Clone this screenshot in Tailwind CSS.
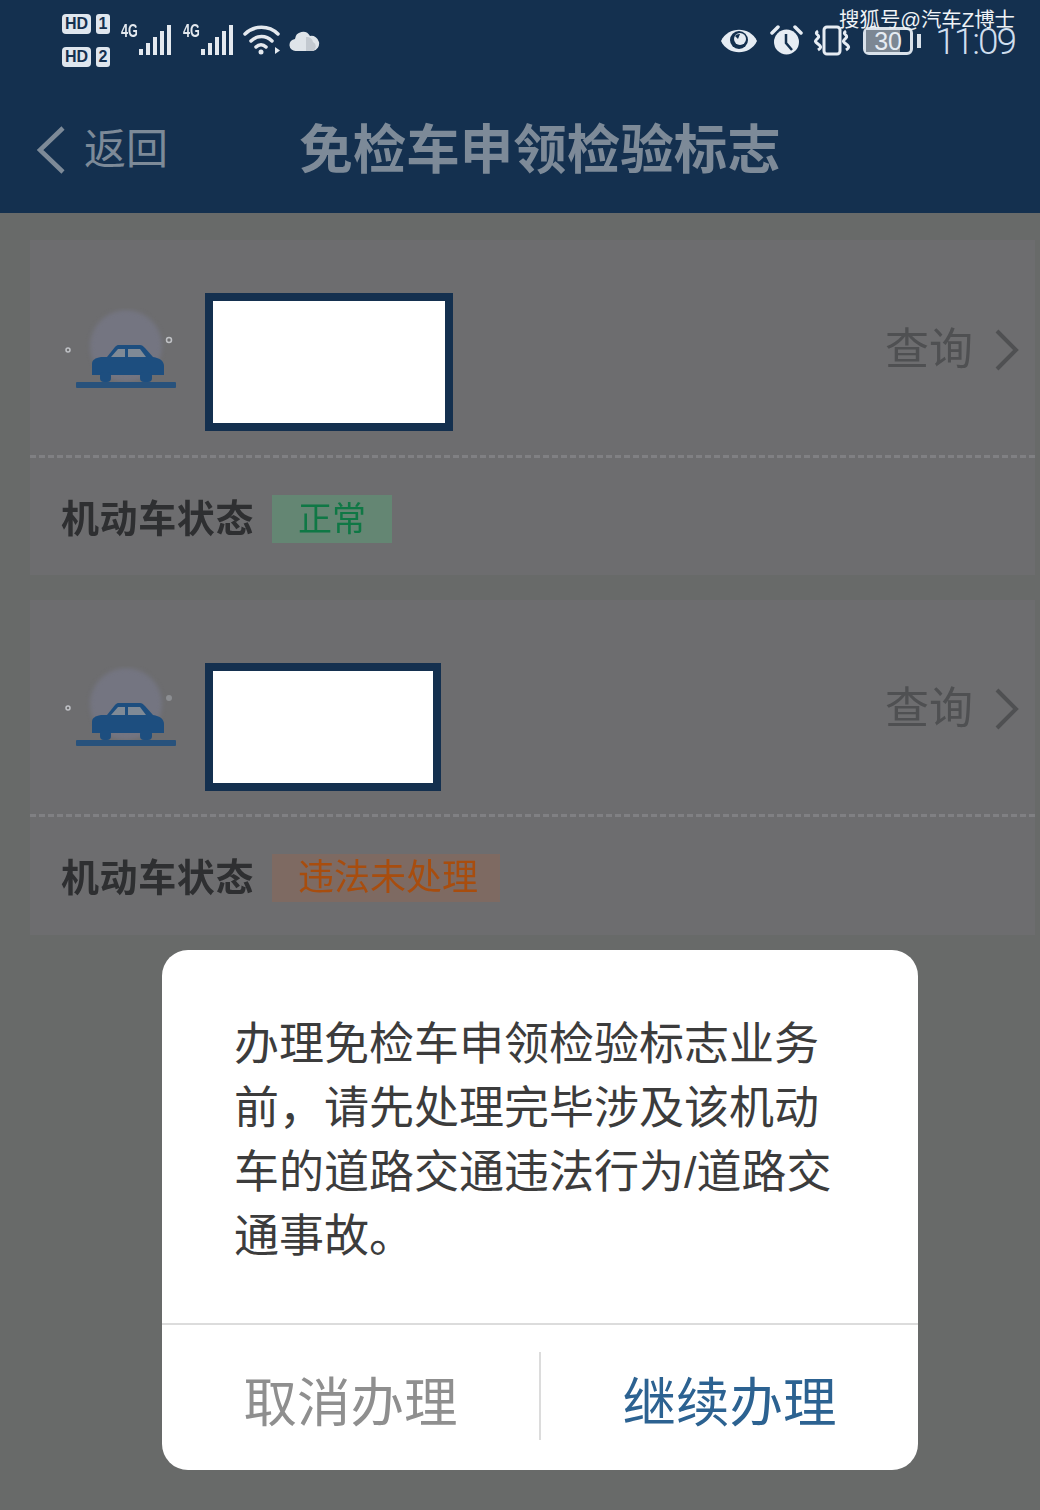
<!DOCTYPE html>
<html>
<head>
<meta charset="UTF-8"/>
<title>免检车申领检验标志</title>
<script src="https://cdn.jsdelivr.net/npm/@tailwindcss/browser@4"></script>
</head>
<body class="bg-[#686a69]">
<div class="relative w-[1040px] h-[1510px] overflow-hidden font-['Liberation_Sans','Noto_Sans_CJK_SC',sans-serif]">

    <!-- top bar -->
    <header class="h-[213px] bg-[#14304f] relative">
        <div class="flex h-[92px] items-start">
            <div class="ml-[62px] mt-[14px] flex flex-col gap-[13px] w-[50px]">
                <div class="flex gap-[5px]">
                    <span class="w-[29px] h-[20px] rounded-[4px] bg-[#dfe6ee] text-[#14304f] text-[16px] leading-[20px] font-bold text-center">HD</span>
                    <span class="w-[14px] h-[20px] rounded-[3px] bg-[#dfe6ee] text-[#14304f] text-[16px] leading-[20px] font-bold text-center">1</span>
                </div>
                <div class="flex gap-[5px]">
                    <span class="w-[29px] h-[20px] rounded-[4px] bg-[#dfe6ee] text-[#14304f] text-[16px] leading-[20px] font-bold text-center">HD</span>
                    <span class="w-[14px] h-[20px] rounded-[3px] bg-[#dfe6ee] text-[#14304f] text-[16px] leading-[20px] font-bold text-center">2</span>
                </div>
            </div>
            <div class="ml-[9px] mt-[21px] flex items-end h-[34px]">
                <span class="self-start text-[18px] leading-[20px] font-bold text-[#e4e9ef] w-[18px] scale-x-70 origin-left">4G</span>
                <svg width="33" height="31" viewBox="0 0 33 31" fill="#e4e9ef"><rect x="0" y="25" width="4" height="6"/><rect x="7" y="19" width="4" height="12"/><rect x="14" y="13" width="4" height="18"/><rect x="21" y="7" width="4" height="24"/><rect x="28" y="1" width="4" height="30"/></svg>
            </div>
            <div class="ml-[11px] mt-[21px] flex items-end h-[34px]">
                <span class="self-start text-[18px] leading-[20px] font-bold text-[#e4e9ef] w-[18px] scale-x-70 origin-left">4G</span>
                <svg width="33" height="31" viewBox="0 0 33 31" fill="#e4e9ef"><rect x="0" y="25" width="4" height="6"/><rect x="7" y="19" width="4" height="12"/><rect x="14" y="13" width="4" height="18"/><rect x="21" y="7" width="4" height="24"/><rect x="28" y="1" width="4" height="30"/></svg>
            </div>
            <svg class="ml-[9px] mt-[24px]" width="38" height="32" viewBox="0 0 38 32" fill="none" stroke="#e4e9ef" stroke-width="3.5" stroke-linecap="round"><path d="M2 10C11 1 26 1 35 10"/><path d="M8 17C14 11 23 11 29 17"/><path d="M13 23C16 20 20 20 23 23"/><circle cx="18" cy="28" r="2.5" fill="#e4e9ef" stroke="none"/><path d="M32 23v7l5-3.500z" fill="#e4e9ef" stroke="none"/></svg>
            <svg class="ml-[7px] mt-[29px]" width="32" height="24" viewBox="0 0 32 24"><path d="M8 22a6 6 0 0 1-1-12 8 8 0 0 1 15-3 7 7 0 0 1 3 15z" fill="#dfe4e9"/><path d="M18 22V8a6 6 0 0 1 7 5 5 5 0 0 1 0 9z" fill="#c3c9d0"/></svg>

            <div class="ml-auto mr-[25px] mt-[6px] flex flex-col items-end">
                <span class="text-[20.400px] leading-[28px] text-[#f0f3f6] z-10">搜狐号@汽车Z博士</span>
                <div class="flex items-center -mt-[11px] h-[36px]">
                    <svg width="38" height="28" viewBox="0 0 38 28"><path d="M1 14C8 -1 30 -1 37 14C30 29 8 29 1 14Z" fill="#e6ecf3"/><circle cx="19" cy="13" r="9" fill="#14304f"/><circle cx="20" cy="12" r="6" fill="#e6ecf3"/><path d="M15 9a6 6 0 0 1 5-2l-2 5z" fill="#14304f"/></svg>
                    <svg class="ml-[12px]" width="33" height="32" viewBox="0 0 33 32"><circle cx="16.500" cy="17" r="12.500" fill="#e6ecf3"/><path d="M16 9v9l6 7" fill="none" stroke="#14304f" stroke-width="2.500"/><path d="M2 8l6-6M31 8l-6-6" stroke="#e6ecf3" stroke-width="3.500" stroke-linecap="round"/></svg>
                    <svg class="ml-[10px]" width="38" height="32" viewBox="0 0 38 32" fill="none" stroke="#e6ecf3"><rect x="11" y="2" width="16" height="27" rx="3" stroke-width="3"/><path d="M5 6c-5 3 3 4 0 7s-4 3 0 6 3 4 0 6" stroke-width="3"/><path d="M33 6c-5 3 3 4 0 7s-4 3 0 6 3 4 0 6" stroke-width="3"/></svg>
                    <div class="ml-[12px] w-[50px] h-[28px] rounded-[6px] border-[3px] border-[#d9e1ea] relative flex items-center justify-center">
                        <div class="absolute left-0 top-0 bottom-0 w-[34px] bg-[#7c8793]"></div>
                        <span class="relative text-[25px] leading-none text-[#e6ecf3]">30</span>
                    </div>
                    <div class="ml-[4px] w-[4px] h-[14px] bg-[#d9e1ea]"></div>
                    <span class="ml-[14px] font-['Roboto'] font-light text-[37px] leading-none text-[#cfdeee] tracking-[-2px]">11:09</span>
                </div>
            </div>
        </div>
        <div class="relative h-[121px]">
            <div class="absolute left-[36px] top-[33px] flex items-center">
                <svg width="30" height="50" viewBox="0 0 30 50" fill="none" stroke="#7d8a98" stroke-width="4.500"><path d="M27 3L4 25L27 47"/></svg>
                <span class="ml-[18px] text-[42px] leading-[50px] text-[#7d8a98]">返回</span>
            </div>
            <h1 class="text-center pl-[40px] pt-[25px] text-[53.500px] leading-[68px] font-bold text-[#7d8a98]">免检车申领检验标志</h1>
        </div>
    </header>

    <!-- vehicle list -->
    <main class="pt-[27px] flex flex-col gap-[25px]">
        <section class="ml-[30px] mr-[5px] h-[335px] bg-[#6d6d6f]">
            <div class="h-[215px] flex items-start">
                <svg class="ml-[34px] mt-[68px]" width="114" height="82" viewBox="0 0 114 82" fill="none">
                    <circle class="blur-[2px]" cx="62" cy="38" r="36" fill="#747581"/>
                    <circle cx="4" cy="42" r="2" stroke="#bfc1c5" stroke-width="1.500"/>
                    <circle cx="105" cy="32" r="2.500" stroke="#bfc1c5" stroke-width="1.500"/>
                    <path d="M28 56c0-4 3-6 9-7h6l8-10c1-1 2-2 3-2h22c2 0 3 1 5 3l8 9c7 1 11 4 11 9v9H28z" fill="#1d4e7f"/>
                    <path d="M47 49l7-8h7v8zM64 41h12l6 8H64z" fill="#7f8a96"/>
                    <rect x="36" y="64" width="11" height="10" rx="4" fill="#1d4e7f"/><rect x="76" y="64" width="12" height="10" rx="4" fill="#1d4e7f"/>
                    <rect x="12" y="74" width="100" height="6" rx="1" fill="#28527c"/>
                </svg>
                <div class="ml-[27px] mt-[53px] w-[248px] h-[138px] bg-white border-[8px] border-[#14304f]"></div>
                <div class="ml-auto mt-[82px] mr-[15px] flex items-center">
                    <span class="text-[44px] leading-[56px] text-[#4f5052] blur-[0.5px]">查询</span>
                    <svg class="ml-[21px]" width="26" height="42" viewBox="0 0 26 42" fill="none" stroke="#4f5052" stroke-width="4"><path d="M3 2L22 21L3 40"/></svg>
                </div>
            </div>
            <div class="border-t-[3px] border-dashed border-[#808083]"></div>
            <div class="flex items-center pl-[31px] pt-[37px]">
                <span class="w-[194px] whitespace-nowrap text-[38px] leading-[44px] font-bold text-[#2e2f31] tracking-[0.6px] blur-[0.5px]">机动车状态</span>
                <span class="ml-[17px] w-[120px] h-[48px] flex items-center pl-[26px] bg-[#648673] text-[34px] text-[#0f7845] blur-[0.5px]">正常</span>
            </div>
        </section>
        <section class="ml-[30px] mr-[5px] h-[335px] bg-[#6d6d6f]">
            <div class="h-[205px] flex items-start">
                <svg class="ml-[34px] mt-[66px]" width="114" height="82" viewBox="0 0 114 82" fill="none">
                    <circle class="blur-[2px]" cx="62" cy="38" r="36" fill="#747581"/>
                    <circle cx="4" cy="42" r="2" stroke="#bfc1c5" stroke-width="1.500"/>
                    <circle cx="105" cy="32" r="3" fill="#8c8e92"/>
                    <path d="M28 56c0-4 3-6 9-7h6l8-10c1-1 2-2 3-2h22c2 0 3 1 5 3l8 9c7 1 11 4 11 9v9H28z" fill="#1d4e7f"/>
                    <path d="M47 49l7-8h7v8zM64 41h12l6 8H64z" fill="#7f8a96"/>
                    <rect x="36" y="64" width="11" height="10" rx="4" fill="#1d4e7f"/><rect x="76" y="64" width="12" height="10" rx="4" fill="#1d4e7f"/>
                    <rect x="12" y="74" width="100" height="6" rx="1" fill="#28527c"/>
                </svg>
                <div class="ml-[27px] mt-[63px] w-[236px] h-[128px] bg-white border-[8px] border-[#14304f]"></div>
                <div class="ml-auto mt-[81px] mr-[15px] flex items-center">
                    <span class="text-[44px] leading-[56px] text-[#4f5052] blur-[0.5px]">查询</span>
                    <svg class="ml-[21px]" width="26" height="42" viewBox="0 0 26 42" fill="none" stroke="#4f5052" stroke-width="4"><path d="M3 2L22 21L3 40"/></svg>
                </div>
            </div>
            <div class="mt-[9px] border-t-[3px] border-dashed border-[#808083]"></div>
            <div class="flex items-center pl-[31px] pt-[37px]">
                <span class="w-[194px] whitespace-nowrap text-[38px] leading-[44px] font-bold text-[#2e2f31] tracking-[0.6px] blur-[0.5px]">机动车状态</span>
                <span class="ml-[17px] w-[228px] h-[48px] flex items-center pl-[26px] bg-[#7e6a62] text-[36px] text-[#a84d0e] blur-[0.5px]">违法未处理</span>
            </div>
        </section>
    </main>

    <!-- dialog -->
    <div class="absolute left-[162px] top-[950px] w-[756px] h-[520px] bg-white rounded-[26px] flex flex-col">
        <p class="h-[373px] pl-[72px] pr-[70px] pt-[63px] text-[45px] leading-[64px] text-[#3c3c3c]">办理免检车申领检验标志业务前，请先处理完毕涉及该机动车的道路交通违法行为/道路交通事故。</p>
        <div class="flex-1 border-t-2 border-[#dcdcdc] flex items-start pt-[27px]">
            <button class="w-[379px] h-[88px] pt-[12px] text-[53.500px] text-[#8f8f8f] border-r-2 border-[#dcdcdc]">取消办理</button>
            <button class="flex-1 h-[88px] pt-[12px] text-[53.500px] text-[#2c6291]">继续办理</button>
        </div>
    </div>
</div>
</body>
</html>
